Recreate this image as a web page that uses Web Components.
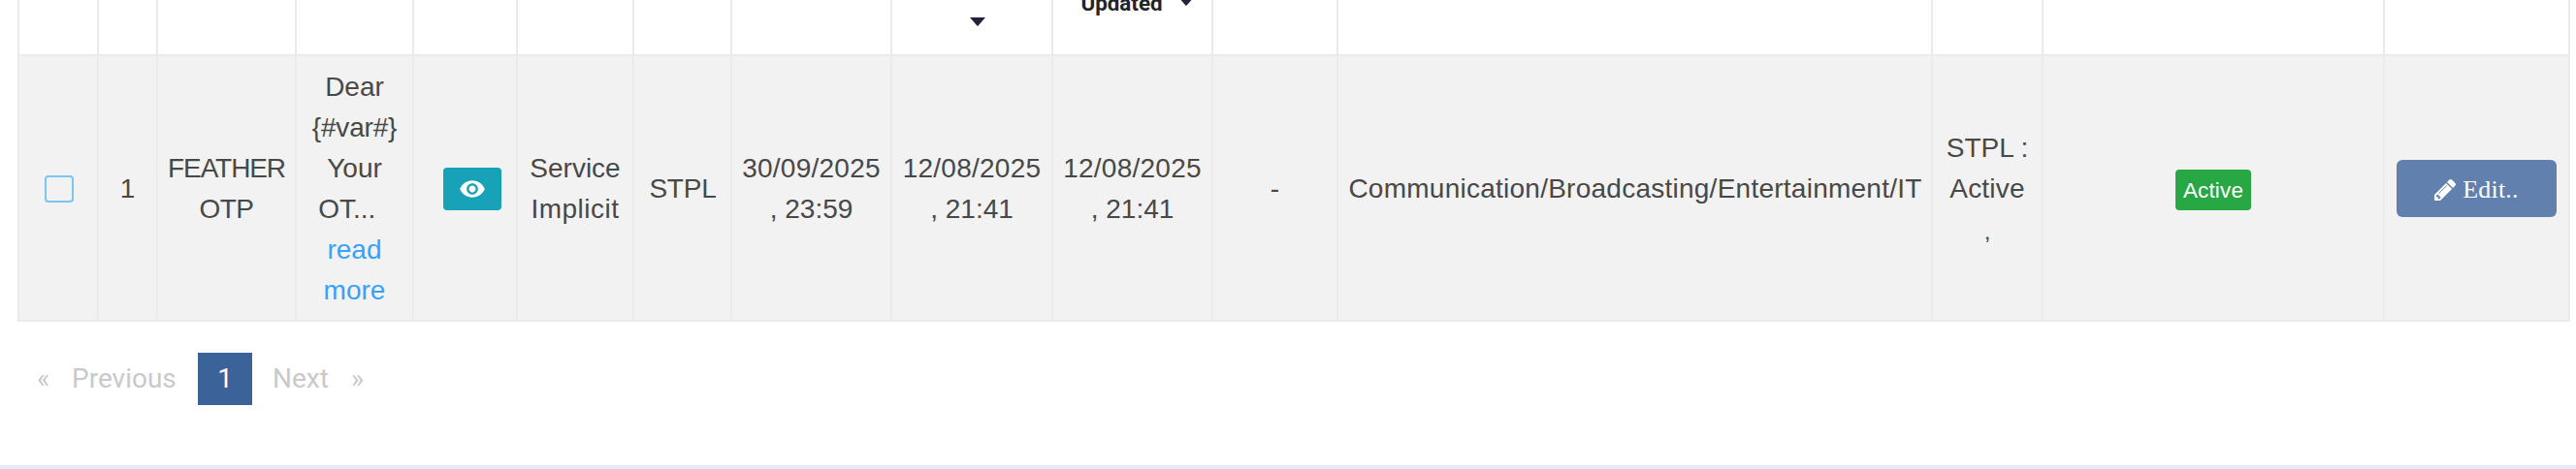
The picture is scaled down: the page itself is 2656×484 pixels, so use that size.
<!DOCTYPE html>
<html lang="en">
<head>
<meta charset="utf-8">
<title>Templates</title>
<style>
html,body{margin:0;height:100%;overflow:hidden;background:#fff}
</style>
</head>
<body>
<template-page></template-page>
<script>
const define = (name, html) => customElements.define(name, class extends HTMLElement {
  constructor() {
    super();
    this.attachShadow({ mode: 'open' }).innerHTML = html;
  }
});

// Table parts
define('data-table', `<style>
:host{display:block;box-sizing:border-box;width:2632px;margin-left:18px;
--cols:82px 61px 143px 121px 107px 120px 101px 165px 166px 165px 129px 613px 114px 352px 191px}
</style><slot></slot>`);

define('table-row', `<style>
:host{display:grid;grid-template-columns:var(--cols);box-sizing:border-box;width:2632px;
border-right:2px solid #ebebeb;border-bottom:2px solid #ebebeb;height:274px;background:#f2f2f2}
:host([head]){height:58px;background:#fff}
</style><slot></slot>`);

define('table-cell', `<style>
:host{display:flex;flex-direction:column;justify-content:center;align-items:center;box-sizing:border-box;min-width:0;min-height:0;
border-left:2px solid #ebebeb;font:28px/42px "Liberation Sans",Arial,sans-serif;color:#484848;white-space:nowrap;text-align:center}
</style><slot></slot>`);

define('head-cell', `<style>
:host{display:flex;justify-content:center;align-items:flex-end;box-sizing:border-box;height:56px;min-width:0;
border-left:2px solid #ebebeb;font:700 22.4px/26px Roboto,sans-serif;color:#212529;white-space:nowrap}
</style><slot></slot>`);

define('text-line', `<style>:host{display:block;box-sizing:border-box;height:42px;padding-top:1px}</style><slot></slot>`);
define('text-link', `<style>:host{display:block;box-sizing:border-box;height:42px;padding-top:1px;color:#36a3f7}</style><slot></slot>`);

define('sort-caret', `<style>:host{display:block;width:16px;height:9px}svg{display:block}</style>
<svg width="16" height="9" viewBox="0 0 16 9"><path d="M0 0H16L8.6 8.6Q8 9.2 7.4 8.6Z" fill="#281f3d"/></svg>`);

define('check-box', `<style>
:host{display:block;box-sizing:border-box;width:30px;height:28px;border:2px solid #7cc4f2;border-radius:4px;margin:2px 0 0 2px}
</style>`);

// Buttons and badges
define('view-button', `<style>
:host{display:flex;align-items:center;justify-content:center;width:60px;height:44px;margin:2px 0 0 14px;border-radius:4px;background:#17a2b8}
svg{display:block}
</style><svg width="28" height="28" viewBox="0 0 24 24" fill="#fff"><path d="M12 4.5C7 4.5 2.73 7.61 1 12c1.73 4.39 6 7.5 11 7.5s9.27-3.11 11-7.5c-1.73-4.39-6-7.5-11-7.5zM12 17c-2.76 0-5-2.24-5-5s2.24-5 5-5 5 2.24 5 5-2.24 5-5 5zm0-8c-1.66 0-3 1.34-3 3s1.34 3 3 3 3-1.34 3-3-1.34-3-3-3z"/></svg>`);

define('status-badge', `<style>
:host{display:block;box-sizing:border-box;width:78px;height:42px;padding-top:1px;margin-top:4px;border-radius:4px;background:#28a745;color:#fff;font-size:22.4px;line-height:42px;letter-spacing:.2px}
</style><slot></slot>`);

define('edit-button', `<style>
:host{display:flex;align-items:center;justify-content:center;width:165px;height:59px;margin-top:1px;border-radius:6px;background:#6280ae;
color:#fff;font:26px/30px "Liberation Serif","Times New Roman",serif}
svg{display:block;margin:2px 7px 0 0}
span{padding-top:3px;letter-spacing:.2px}
</style><svg width="22" height="22" viewBox="0 149 1515 1515" fill="#fff"><path d="M363 1536l91-91-235-235-91 91v107h128v128h107zM886 608q0-22-22-22-10 0-17 7l-542 542q-7 7-7 17 0 22 22 22 10 0 17-7l542-542q7-7 7-17zM832 416l416 416-832 832h-416v-416zM1515 512q0 53-37 90l-166 166-416-416 166-165q36-38 90-38 53 0 91 38l235 234q37 39 37 91z"/></svg><span><slot></slot></span>`);

// Pagination
define('page-nav', `<style>
:host{display:flex;align-items:center;height:54px;margin:32px 0 0 38px;font:28px/54px Roboto,sans-serif;color:#c9c9c9}
</style><slot></slot>`);
define('page-link', `<style>
:host{display:block;white-space:nowrap}
:host([active]){width:56px;height:54px;text-align:center;color:#fff;background:#3b6399}
</style><slot></slot>`);

define('page-footer', `<style>:host{display:block;height:4px;margin-top:62px;background:#e6e9fc}</style>`);

define('template-page', `<style>
:host{display:block;width:2656px;height:484px;overflow:hidden;background:#fff}
.caret-low{margin:0 0 29px 12px}
.updated{display:block;margin:0 0 40px 10px}
.caret-high{margin:0 0 50px 16px}
.l{letter-spacing:.25px}
</style>
<data-table>
<table-row head>
${'<head-cell></head-cell>'.repeat(8)}
<head-cell><sort-caret class="caret-low"></sort-caret></head-cell>
<head-cell><span class="updated">Updated</span><sort-caret class="caret-high"></sort-caret></head-cell>
${'<head-cell></head-cell>'.repeat(5)}
</table-row>
<table-row>
<table-cell><check-box></check-box></table-cell>
<table-cell><text-line>1</text-line></table-cell>
<table-cell><text-line style="letter-spacing:-1.1px">FEATHER</text-line><text-line style="letter-spacing:-.5px">OTP</text-line></table-cell>
<table-cell><text-line>Dear</text-line><text-line style="letter-spacing:-.2px">{#var#}</text-line><text-line>Your</text-line><text-line>OT...&nbsp;&nbsp;</text-line><text-link>read</text-link><text-link>more</text-link></table-cell>
<table-cell><view-button></view-button></table-cell>
<table-cell><text-line>Service</text-line><text-line style="letter-spacing:.5px">Implicit</text-line></table-cell>
<table-cell><text-line style="padding-left:1px;letter-spacing:-.2px">STPL</text-line></table-cell>
<table-cell><text-line class="l">30/09/2025</text-line><text-line>, 23:59</text-line></table-cell>
<table-cell><text-line class="l">12/08/2025</text-line><text-line>, 21:41</text-line></table-cell>
<table-cell><text-line class="l">12/08/2025</text-line><text-line>, 21:41</text-line></table-cell>
<table-cell><text-line>-</text-line></table-cell>
<table-cell><text-line class="l" style="padding-left:1px">Communication/Broadcasting/Entertainment/IT</text-line></table-cell>
<table-cell><text-line>STPL :</text-line><text-line style="letter-spacing:.2px">Active</text-line><text-line style="font-size:24px;padding-top:3px">,</text-line></table-cell>
<table-cell><status-badge>Active</status-badge></table-cell>
<table-cell><edit-button>Edit..</edit-button></table-cell>
</table-row>
</data-table>
<page-nav>
<page-link style="width:36px">«</page-link><page-link style="width:130px">Previous</page-link><page-link active>1</page-link><page-link style="margin-left:21px;width:81px">Next</page-link><page-link>»</page-link>
</page-nav>
<page-footer></page-footer>`);
</script>
</body>
</html>
